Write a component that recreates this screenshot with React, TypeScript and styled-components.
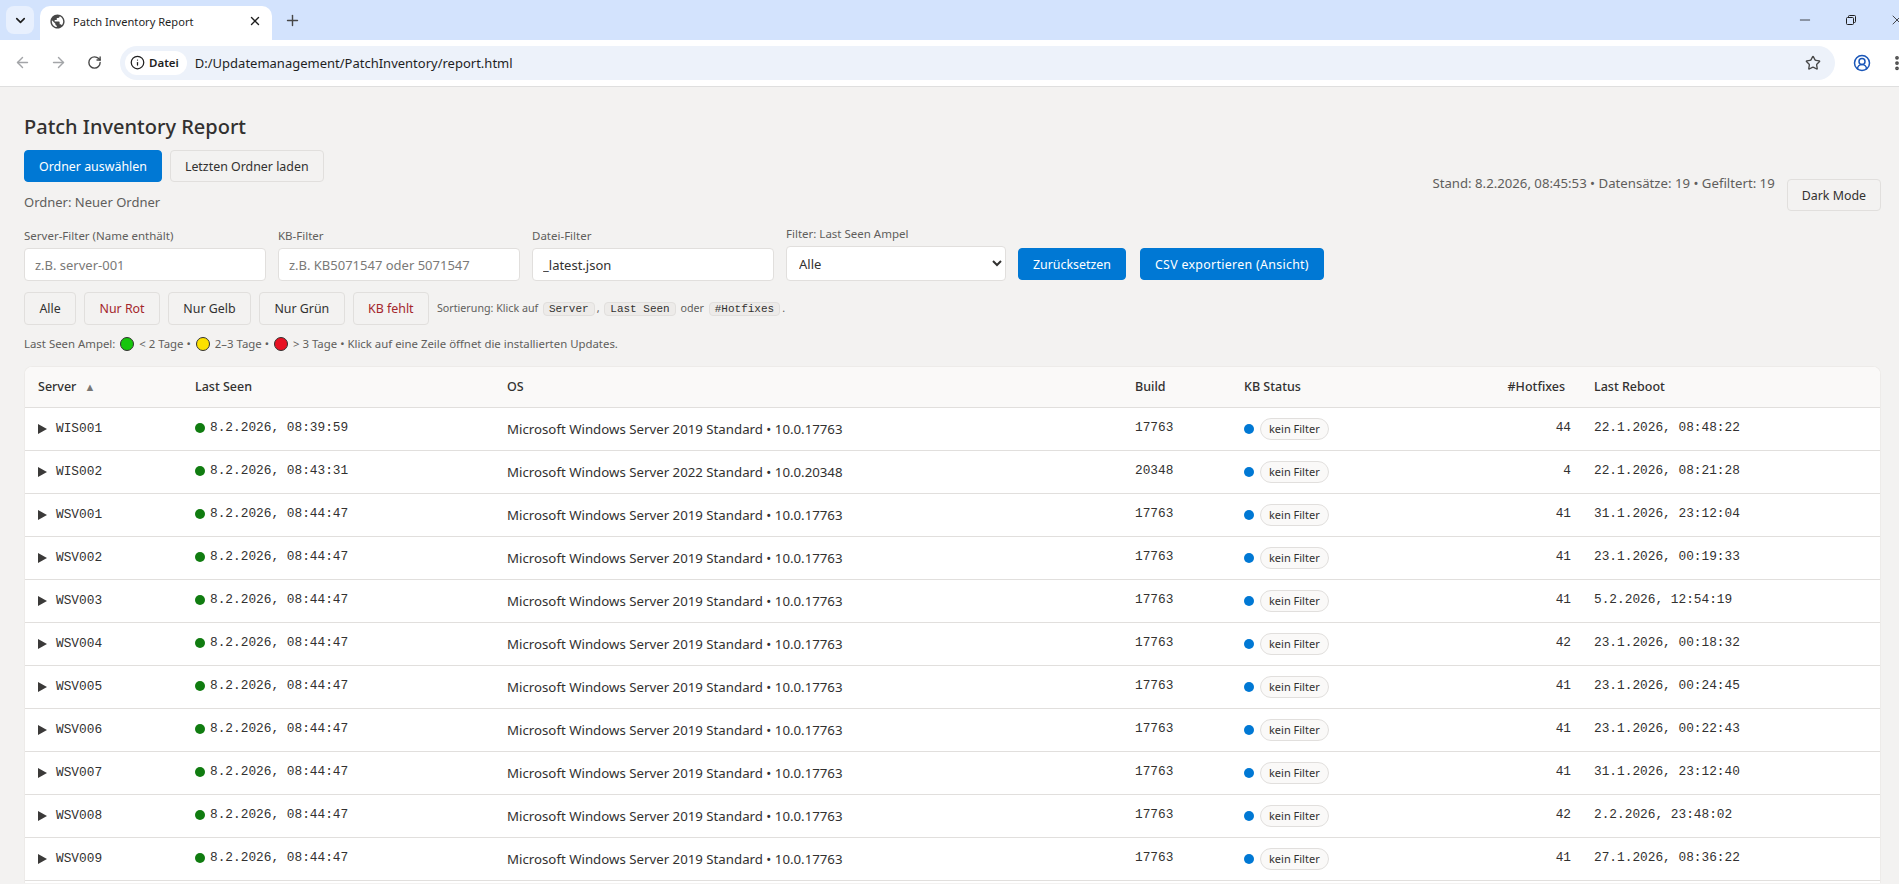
import * as React from "react";
import styled, { createGlobalStyle } from "styled-components";
import {
  ArrowLeft,
  ArrowRight,
  ChevronDown,
  CircleUserRound,
  EllipsisVertical,
  Info,
  Minus,
  Plus,
  RotateCw,
  Star,
  X,
} from "lucide-react";
import { MdPublic } from "react-icons/md";

const uiFont = `"Noto Sans", "Open Sans", sans-serif`;
const monoFont = `"Liberation Mono", "DejaVu Sans Mono", monospace`;

const GlobalStyle = createGlobalStyle`
  * { box-sizing: border-box; }
  html, body {
    margin: 0;
    height: 100%;
    overflow: hidden;
    background: #f3f2f1;
    color: #323130;
    font-family: ${uiFont};
    font-size: 13px;
  }
`;

// browser chrome
const TabStrip = styled.div`
  height: 40px;
  background: #d3e3fd;
  display: flex;
  align-items: flex-end;
  padding-left: 6px;
  overflow: hidden;
`;

const TabSearch = styled.div`
  width: 28px;
  height: 28px;
  margin-bottom: 6px;
  border-radius: 8px;
  background: #e8f0fe;
  display: flex;
  align-items: center;
  justify-content: center;
  color: #1f1f1f;
`;

const Tab = styled.div`
  width: 232px;
  height: 34px;
  margin-left: 6px;
  padding: 0 10px 4px 9px;
  border-radius: 10px 10px 0 0;
  background: #fff;
  display: flex;
  align-items: center;
  gap: 7px;
  color: #1f1f1f;
  font-size: 11.1px;
`;

const TabTitle = styled.span`
  flex: 1;
`;

const NewTab = styled.div`
  width: 28px;
  height: 28px;
  margin: 0 0 6px 6px;
  display: flex;
  align-items: center;
  justify-content: center;
  color: #474747;
`;

const WindowControls = styled.div`
  margin-left: auto;
  height: 40px;
  display: flex;
  align-items: center;
  gap: 32px;
  margin-right: -6px;
  flex: none;
  color: #1f1f1f;
`;

const Toolbar = styled.div`
  height: 47px;
  background: #fff;
  border-bottom: 1px solid #dfdfdf;
  display: flex;
  align-items: center;
  padding: 0 0 1px 12px;
  overflow: hidden;
`;

const NavButton = styled.div<{ $off?: boolean }>`
  flex: none;
  width: 20px;
  height: 20px;
  margin-right: 16px;
  display: flex;
  align-items: center;
  justify-content: center;
  color: ${(p) => (p.$off ? "#a3a5a8" : "#474747")};
`;

const Omnibox = styled.div`
  width: 1715px;
  height: 34px;
  flex: none;
  border-radius: 17px;
  background: #edf2fa;
  display: flex;
  align-items: center;
  padding: 0 14px 0 5px;
  color: #1f1f1f;
  font-size: 13px;
`;

const SecurityChip = styled.div`
  height: 24px;
  padding: 0 8px 0 5px;
  border-radius: 12px;
  background: #fff;
  display: flex;
  align-items: center;
  gap: 4px;
  font-size: 11.5px;
  font-weight: 600;
  margin-right: 8px;
`;

const Url = styled.span`
  flex: 1;
`;

const ToolIcons = styled.div`
  display: flex;
  flex: none;
  align-items: center;
  gap: 17px;
  margin-left: 18px;
  color: #474747;
`;

// report page
const Main = styled.main`
  padding: 25px 18px 0 24px;
`;

const Title = styled.h1`
  margin: 0 0 9px;
  font-size: 20px;
  line-height: 29px;
  font-weight: 500;
`;

const HeaderRow = styled.div`
  display: flex;
  justify-content: space-between;
  align-items: flex-end;
`;

const ButtonRow = styled.div`
  display: flex;
  align-items: center;
  gap: 8px;
`;

const Button = styled.button<{ $primary?: boolean; $danger?: boolean }>`
  height: 32px;
  padding: 0 14px;
  border-radius: 4px;
  font-family: ${uiFont};
  font-size: 12.4px;
  white-space: nowrap;
  border: 1px solid ${(p) => (p.$primary ? "#0078d4" : "#e1dfdd")};
  background: ${(p) => (p.$primary ? "#0078d4" : "#f3f2f1")};
  color: ${(p) => (p.$primary ? "#fff" : p.$danger ? "#a4262c" : "#323130")};
`;

const ExportButton = styled(Button)`
  letter-spacing: 0.3px;
`;

const FolderNote = styled.div`
  margin-top: 11px;
  color: #605e5c;
  font-size: 13px;
  line-height: 18px;
`;

const StatusArea = styled.div`
  display: flex;
  align-items: flex-end;
  gap: 12px;
`;

const StatusText = styled.div`
  margin-bottom: 19px;
  color: #605e5c;
  font-size: 13.2px;
  line-height: 18px;
`;

const FilterRow = styled.div`
  display: flex;
  align-items: flex-end;
  gap: 12px;
  margin-top: 15px;
`;

const Field = styled.label`
  display: flex;
  flex-direction: column;
  gap: 4px;
  color: #605e5c;
  font-size: 11.5px;
  line-height: 16px;
`;

const TextInput = styled.input`
  width: 242px;
  height: 33px;
  padding: 0 10px;
  border: 1px solid #e1dfdd;
  border-radius: 4px;
  background: #fff;
  color: #323130;
  font-family: ${uiFont};
  font-size: 13px;
  &::placeholder {
    color: #7a7977;
  }
`;

const Select = styled.select`
  width: 220px;
  height: 35px;
  padding: 0 8px;
  border: 1px solid #e1dfdd;
  border-radius: 4px;
  background: #fff;
  color: #323130;
  font-family: ${uiFont};
  font-size: 13px;
`;

const ActionGroup = styled.div`
  display: flex;
  gap: 14px;
  margin-bottom: 1px;
`;

const QuickRow = styled(ButtonRow)`
  margin-top: 11px;
`;

const QuickButton = styled(Button)`
  height: 33px;
  padding: 0 14.4px;
`;

const Hint = styled.span`
  color: #605e5c;
  font-size: 10.7px;
`;

const Code = styled.code`
  display: inline-block;
  margin: 0 2px;
  padding: 0 5px;
  border: 1px solid #e1dfdd;
  border-radius: 4px;
  background: #edebe9;
  color: #323130;
  font-family: ${monoFont};
  font-size: 11px;
`;

const Legend = styled.div`
  margin-top: 10px;
  color: #605e5c;
  font-size: 11.4px;
  line-height: 18px;
  display: flex;
  align-items: center;
  gap: 5px;
`;

const LegendDot = styled.span<{ $color: string }>`
  width: 14px;
  height: 14px;
  border-radius: 50%;
  background: ${(p) => p.$color};
  border: 1px solid #323130;
`;

const TableCard = styled.div`
  margin-top: 13px;
  min-height: 517px;
  background: #fff;
  border: 1px solid #edebe9;
  border-bottom: 0;
  border-radius: 8px 8px 0 0;
  overflow: hidden;
`;

const Table = styled.table`
  width: 100%;
  table-layout: fixed;
  border-collapse: collapse;
`;

const Th = styled.th<{ $width: number; $right?: boolean }>`
  width: ${(p) => p.$width}px;
  height: 40px;
  padding: 0 ${(p) => (p.$right ? "16px" : "13px")} 0 13px;
  background: #faf9f8;
  border-bottom: 1px solid #e1dfdd;
  text-align: ${(p) => (p.$right ? "right" : "left")};
  font-size: 12.5px;
  font-weight: 500;
`;

const SortMark = styled.span`
  margin-left: 8px;
  color: #797775;
  font-size: 11px;
`;

const Td = styled.td<{ $mono?: boolean; $right?: boolean; $raised?: boolean }>`
  height: 43px;
  padding: 0 ${(p) => (p.$right ? "10px" : "13px")} ${(p) => (p.$raised ? "2px" : "0")} 13px;
  border-bottom: 1px solid #e1dfdd;
  text-align: ${(p) => (p.$right ? "right" : "left")};
  font-family: ${(p) => (p.$mono ? monoFont : uiFont)};
  font-size: ${(p) => (p.$mono ? "12.8px" : "13.25px")};
  white-space: nowrap;
`;

const ServerCell = styled.span`
  display: flex;
  align-items: center;
  gap: 9px;
`;

const Expander = styled.span`
  width: 0;
  height: 0;
  border-style: solid;
  border-width: 5.5px 0 5.5px 9.5px;
  border-color: transparent transparent transparent #3b3a39;
`;

const SeenCell = styled.span`
  display: flex;
  align-items: center;
  gap: 5px;
`;

const Dot = styled.span<{ $color: string }>`
  flex: none;
  width: 10px;
  height: 10px;
  border-radius: 50%;
  background: ${(p) => p.$color};
`;

const KbCell = styled.span`
  display: flex;
  align-items: center;
  gap: 6px;
`;

const Pill = styled.span`
  height: 22px;
  padding: 0 8px;
  border: 1px solid #e1dfdd;
  border-radius: 11px;
  background: #faf9f8;
  font-size: 11px;
  line-height: 20px;
`;

const RestoreIcon = () => (
  <svg width="12" height="12" viewBox="0 0 12 12" fill="none" stroke="currentColor">
    <rect x="1.5" y="3.5" width="7" height="7" rx="1" />
    <path d="M3.5 3.5V2.5a1 1 0 0 1 1-1h5a1 1 0 0 1 1 1v5a1 1 0 0 1-1 1h-1" />
  </svg>
);

const OS_2019 = "Microsoft Windows Server 2019 Standard • 10.0.17763";
const OS_2022 = "Microsoft Windows Server 2022 Standard • 10.0.20348";

const rows = [
  { name: "WIS001", seen: "8.2.2026, 08:39:59", os: OS_2019, build: "17763", fixes: 44, reboot: "22.1.2026, 08:48:22" },
  { name: "WIS002", seen: "8.2.2026, 08:43:31", os: OS_2022, build: "20348", fixes: 4, reboot: "22.1.2026, 08:21:28" },
  { name: "WSV001", seen: "8.2.2026, 08:44:47", os: OS_2019, build: "17763", fixes: 41, reboot: "31.1.2026, 23:12:04" },
  { name: "WSV002", seen: "8.2.2026, 08:44:47", os: OS_2019, build: "17763", fixes: 41, reboot: "23.1.2026, 00:19:33" },
  { name: "WSV003", seen: "8.2.2026, 08:44:47", os: OS_2019, build: "17763", fixes: 41, reboot: "5.2.2026, 12:54:19" },
  { name: "WSV004", seen: "8.2.2026, 08:44:47", os: OS_2019, build: "17763", fixes: 42, reboot: "23.1.2026, 00:18:32" },
  { name: "WSV005", seen: "8.2.2026, 08:44:47", os: OS_2019, build: "17763", fixes: 41, reboot: "23.1.2026, 00:24:45" },
  { name: "WSV006", seen: "8.2.2026, 08:44:47", os: OS_2019, build: "17763", fixes: 41, reboot: "23.1.2026, 00:22:43" },
  { name: "WSV007", seen: "8.2.2026, 08:44:47", os: OS_2019, build: "17763", fixes: 41, reboot: "31.1.2026, 23:12:40" },
  { name: "WSV008", seen: "8.2.2026, 08:44:47", os: OS_2019, build: "17763", fixes: 42, reboot: "2.2.2026, 23:48:02" },
  { name: "WSV009", seen: "8.2.2026, 08:44:47", os: OS_2019, build: "17763", fixes: 41, reboot: "27.1.2026, 08:36:22" },
];

export default function App() {
  return (
    <>
      <GlobalStyle />
      <TabStrip>
        <TabSearch>
          <ChevronDown size={15} strokeWidth={2.6} />
        </TabSearch>
        <Tab>
          <MdPublic size={17} color="#474747" />
          <TabTitle>Patch Inventory Report</TabTitle>
          <X size={14} strokeWidth={2.4} />
        </Tab>
        <NewTab>
          <Plus size={17} strokeWidth={2} />
        </NewTab>
        <WindowControls>
          <Minus size={16} strokeWidth={1.2} />
          <RestoreIcon />
          <X size={16} strokeWidth={1.2} />
        </WindowControls>
      </TabStrip>
      <Toolbar>
        <NavButton $off>
          <ArrowLeft size={17} />
        </NavButton>
        <NavButton $off>
          <ArrowRight size={17} />
        </NavButton>
        <NavButton>
          <RotateCw size={15} strokeWidth={2.2} />
        </NavButton>
        <Omnibox>
          <SecurityChip>
            <Info size={15} />
            Datei
          </SecurityChip>
          <Url>D:/Updatemanagement/PatchInventory/report.html</Url>
          <Star size={16} strokeWidth={2} color="#474747" />
        </Omnibox>
        <ToolIcons>
          <CircleUserRound size={18} color="#1a56b8" />
          <EllipsisVertical size={18} strokeWidth={3} />
        </ToolIcons>
      </Toolbar>
      <Main>
        <Title>Patch Inventory Report</Title>
        <HeaderRow>
          <div>
            <ButtonRow>
              <Button $primary>Ordner auswählen</Button>
              <Button>Letzten Ordner laden</Button>
            </ButtonRow>
            <FolderNote>Ordner: Neuer Ordner</FolderNote>
          </div>
          <StatusArea>
            <StatusText>Stand: 8.2.2026, 08:45:53 • Datensätze: 19 • Gefiltert: 19</StatusText>
            <Button>Dark Mode</Button>
          </StatusArea>
        </HeaderRow>
        <FilterRow>
          <Field>
            Server-Filter (Name enthält)
            <TextInput placeholder="z.B. server-001" />
          </Field>
          <Field>
            KB-Filter
            <TextInput placeholder="z.B. KB5071547 oder 5071547" />
          </Field>
          <Field>
            Datei-Filter
            <TextInput defaultValue="_latest.json" />
          </Field>
          <Field>
            Filter: Last Seen Ampel
            <Select defaultValue="Alle">
              <option>Alle</option>
            </Select>
          </Field>
          <ActionGroup>
            <Button $primary>Zurücksetzen</Button>
            <ExportButton $primary>CSV exportieren (Ansicht)</ExportButton>
          </ActionGroup>
        </FilterRow>
        <QuickRow>
          <QuickButton>Alle</QuickButton>
          <QuickButton $danger>Nur Rot</QuickButton>
          <QuickButton>Nur Gelb</QuickButton>
          <QuickButton>Nur Grün</QuickButton>
          <QuickButton $danger>KB fehlt</QuickButton>
          <Hint>
            Sortierung: Klick auf <Code>Server</Code>, <Code>Last Seen</Code> oder <Code>#Hotfixes</Code>.
          </Hint>
        </QuickRow>
        <Legend>
          Last Seen Ampel: <LegendDot $color="#16c60c" /> &lt; 2 Tage • <LegendDot $color="#fce100" /> 2–3 Tage •{" "}
          <LegendDot $color="#e81123" /> &gt; 3 Tage • Klick auf eine Zeile öffnet die installierten Updates.
        </Legend>
        <TableCard>
          <Table>
            <thead>
              <tr>
                <Th $width={157}>
                  Server<SortMark>▲</SortMark>
                </Th>
                <Th $width={312}>Last Seen</Th>
                <Th $width={628}>OS</Th>
                <Th $width={109}>Build</Th>
                <Th $width={250}>KB Status</Th>
                <Th $width={100} $right>
                  #Hotfixes
                </Th>
                <Th $width={301}>Last Reboot</Th>
              </tr>
            </thead>
            <tbody>
              {rows.map((row) => (
                <tr key={row.name}>
                  <Td $mono>
                    <ServerCell>
                      <Expander />
                      {row.name}
                    </ServerCell>
                  </Td>
                  <Td $mono $raised>
                    <SeenCell>
                      <Dot $color="#107c10" />
                      {row.seen}
                    </SeenCell>
                  </Td>
                  <Td>{row.os}</Td>
                  <Td $mono $raised>
                    {row.build}
                  </Td>
                  <Td>
                    <KbCell>
                      <Dot $color="#0078d4" />
                      <Pill>kein Filter</Pill>
                    </KbCell>
                  </Td>
                  <Td $mono $right $raised>
                    {row.fixes}
                  </Td>
                  <Td $mono $raised>
                    {row.reboot}
                  </Td>
                </tr>
              ))}
            </tbody>
          </Table>
        </TableCard>
      </Main>
    </>
  );
}
